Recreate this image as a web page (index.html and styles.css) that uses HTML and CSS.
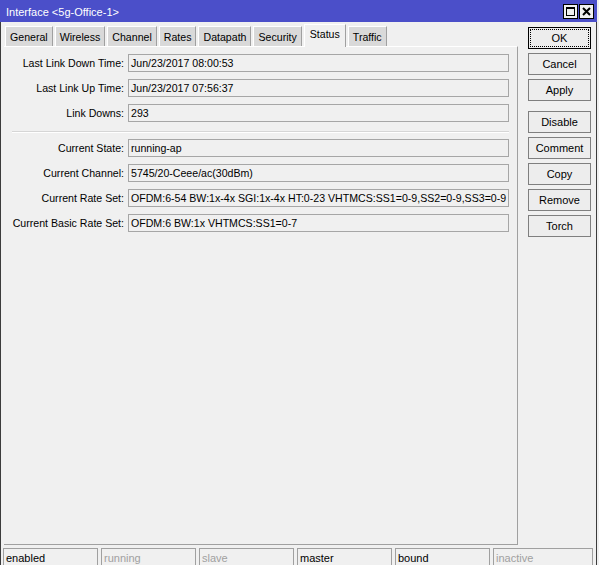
FILE: index.html
```html
<!DOCTYPE html>
<html lang="en">
<head>
  <meta charset="UTF-8">
  <meta name="viewport" content="width=device-width, initial-scale=1.0">
  <title>Interface &lt;5g-Office-1&gt;</title>
  <link rel="stylesheet" href="styles.css">
</head>
<body>

<div class="window">
  <!-- Title bar -->
  <div class="titlebar">
    <span class="title">Interface &lt;5g-Office-1&gt;</span>
    <div class="win-btns">
      <span class="win-btn">
        <svg width="13" height="13" viewBox="0 0 13 13"><rect x="2.5" y="2.5" width="8" height="8" fill="none" stroke="#000"/><rect x="2" y="2" width="9" height="2" fill="#000"/></svg>
      </span>
      <span class="win-btn">
        <svg width="13" height="13" viewBox="0 0 13 13"><path d="M3 3 L10 10 M10 3 L3 10" stroke="#000" stroke-width="2"/></svg>
      </span>
    </div>
  </div>

  <div class="frame">
    <div class="main">
      <div class="left">
        <div class="tabs">
          <div class="tab">General</div>
          <div class="tab">Wireless</div>
          <div class="tab">Channel</div>
          <div class="tab">Rates</div>
          <div class="tab">Datapath</div>
          <div class="tab">Security</div>
          <div class="tab active">Status</div>
          <div class="tab">Traffic</div>
        </div>
        <div class="panel">
          <div class="row"><label>Last Link Down Time:</label><div class="field">Jun/23/2017 08:00:53</div></div>
          <div class="row"><label>Last Link Up Time:</label><div class="field">Jun/23/2017 07:56:37</div></div>
          <div class="row"><label>Link Downs:</label><div class="field">293</div></div>
          <div class="sep"></div>
          <div class="row"><label>Current State:</label><div class="field">running-ap</div></div>
          <div class="row"><label>Current Channel:</label><div class="field">5745/20-Ceee/ac(30dBm)</div></div>
          <div class="row"><label>Current Rate Set:</label><div class="field">OFDM:6-54 BW:1x-4x SGI:1x-4x HT:0-23 VHTMCS:SS1=0-9,SS2=0-9,SS3=0-9</div></div>
          <div class="row"><label>Current Basic Rate Set:</label><div class="field">OFDM:6 BW:1x VHTMCS:SS1=0-7</div></div>
        </div>
      </div>

      <!-- Action buttons -->
      <div class="side">
        <button class="btn default">OK</button>
        <button class="btn">Cancel</button>
        <button class="btn">Apply</button>
        <button class="btn spaced">Disable</button>
        <button class="btn">Comment</button>
        <button class="btn">Copy</button>
        <button class="btn">Remove</button>
        <button class="btn">Torch</button>
      </div>
    </div>

    <!-- Status bar -->
    <div class="statusbar">
      <div class="cell">enabled</div>
      <div class="cell off">running</div>
      <div class="cell off">slave</div>
      <div class="cell">master</div>
      <div class="cell">bound</div>
      <div class="cell off last">inactive</div>
    </div>
  </div>
</div>

</body>
</html>
```

FILE: styles.css
```css
* {
  box-sizing: border-box;
}
body {
  margin: 0;
  padding: 0;
  background-color: #f0f0f0;
  font-family: "Liberation Sans", Arial, sans-serif;
  font-size: 10.6px;
  color: #000;
}

.window {
  width: 597px;
  height: 565px;
  overflow: hidden;
}

.titlebar {
  height: 22px;
  background-color: #4b4fc9;
  display: flex;
  justify-content: space-between;
  align-items: flex-start;
  padding: 0 3px 0 6px;
}
.title {
  color: #fff;
  font-size: 11px;
  line-height: 24px;
}
.win-btns {
  display: flex;
  gap: 1px;
  margin-top: 4px;
}
.win-btn {
  width: 15px;
  height: 15px;
  border: 1px solid #000;
  background-color: #f0f0f0;
  display: flex;
}

.frame {
  height: 543px;
  border-left: 1px solid #3c3c3c;
  border-right: 1px solid #3c3c3c;
}

.main {
  display: flex;
  height: 526px;
}
.left {
  width: 514px;
  margin-left: 3px;
}

.tabs {
  display: flex;
  align-items: flex-end;
  gap: 2px;
  height: 24px;
  padding-left: 1px;
}
.tab {
  height: 20px;
  line-height: 20px;
  padding: 0 4px;
  background-color: #d9d9d9;
  border-top: 1px solid #fff;
  border-left: 1px solid #fff;
  border-right: 1px solid #a0a0a0;
}
.tab.active {
  height: 23px;
  line-height: 19px;
  margin-bottom: -1px;
  padding: 0 5px;
  background-color: #f0f0f0;
  position: relative;
}

.panel {
  height: 499px;
  border-top: 1px solid #fff;
  border-right: 1px solid #a0a0a0;
  border-bottom: 1px solid #a0a0a0;
  padding-top: 7px;
  display: flex;
  flex-direction: column;
  gap: 7px;
}
.row {
  display: grid;
  grid-template-columns: 120px 381px;
  column-gap: 4px;
}
.row label {
  text-align: right;
  line-height: 18px;
  white-space: nowrap;
}
.field {
  height: 18px;
  line-height: 16px;
  border: 1px solid #a6a6a6;
  padding: 0 2px;
  white-space: nowrap;
  overflow: hidden;
}
.sep {
  height: 2px;
  margin: 2px 0 -1px 8px;
  width: 497px;
  border-top: 1px solid #d6d6d6;
  border-bottom: 1px solid #fff;
}

.side {
  display: flex;
  flex-direction: column;
  gap: 4px;
  margin-left: 10px;
  padding-top: 5px;
}
.btn {
  width: 63px;
  height: 22px;
  padding: 0;
  font-family: inherit;
  font-size: 11px;
  color: #000;
  background-color: #ededed;
  border: 1px solid #7f7f7f;
  border-radius: 0;
}
.btn.default {
  border-color: #000;
  outline: 1px dotted #000;
  outline-offset: -3px;
}
.btn.spaced {
  margin-top: 6px;
}

.statusbar {
  display: flex;
  gap: 3px;
  padding: 0 3px 0 2px;
  height: 17px;
}
.cell {
  width: 95px;
  height: 20px;
  border: 1px solid #a0a0a0;
  border-bottom: none;
  padding-left: 2px;
  font-size: 11px;
  line-height: 18px;
}
.cell.off {
  color: #a0a0a0;
}
.cell.last {
  flex: 1;
}
```
